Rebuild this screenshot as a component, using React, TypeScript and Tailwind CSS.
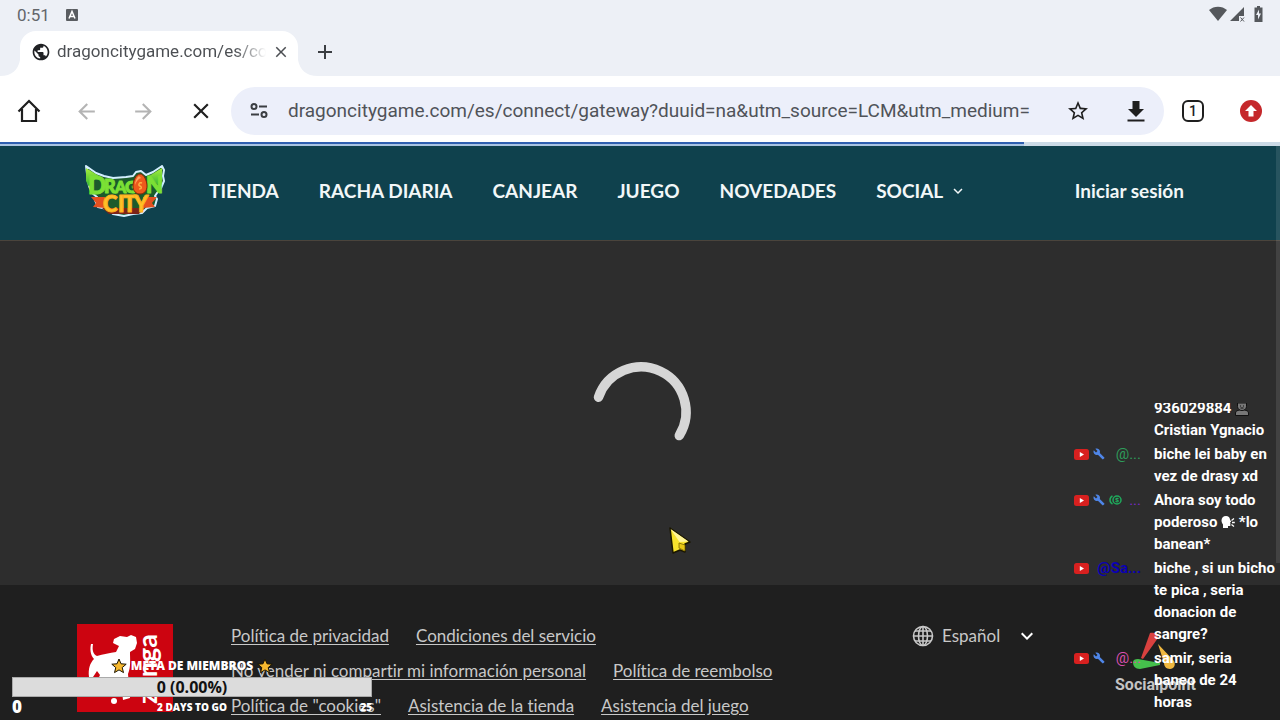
import type { ReactNode } from 'react'
import { MdArrowBack, MdArrowForward, MdBuild, MdClose, MdAdd, MdPublic, MdStarBorder, MdKeyboardArrowDown } from 'react-icons/md'

interface ChatMessage {
  id: number
  wrench?: boolean
  member?: boolean
  author?: string
  authorClass?: string
  text: ReactNode
}

const navItems = ['TIENDA', 'RACHA DIARIA', 'CANJEAR', 'JUEGO', 'NOVEDADES']

const footerLinks = [
  'Política de privacidad',
  'Condiciones del servicio',
  'No vender ni compartir mi información personal',
  'Política de reembolso',
  'Política de "cookies"',
  'Asistencia de la tienda',
  'Asistencia del juego',
]

const messages: ChatMessage[] = [
  { id: 1, text: <>936029884 <BustIcon /> Cristian Ygnacio</> },
  { id: 2, wrench: true, author: '@...', authorClass: 'text-[#2e9d5b]', text: 'biche lei baby en vez de drasy xd' },
  { id: 3, wrench: true, member: true, author: '...', authorClass: 'text-[#7a2bc4]', text: <>Ahora soy todo poderoso <SpeakingIcon /> *lo banean*</> },
  { id: 4, author: '@Sa...', authorClass: 'font-bold text-[#0a00b4]', text: 'biche , si un bicho te pica , seria donacion de sangre?' },
  { id: 5, wrench: true, author: '@...', authorClass: 'text-[#d94fae]', text: 'samir, seria baneo de 24 horas' },
]

function BustIcon() {
  return (
    <svg className="inline h-[14px] w-[14px] align-[-3px]" viewBox="0 0 14 14" fill="#777" stroke="#111" strokeWidth="1">
      <path d="M.5 13.500V11c0-2 2-2.500 4-3h5c2 .5 4 1 4 3v2.500z" />
      <path d="M2.500 1h9v3.500C11.500 7 9.200 8.500 7 8.500S2.500 7 2.500 4.500z" />
      <path d="M5 4h1M8 4h1M5.500 6h3" />
    </svg>
  )
}

function SpeakingIcon() {
  return (
    <svg className="inline h-[14px] w-[14px] align-[-2px]" viewBox="0 0 14 14" fill="#fff">
      <path d="M5 1C2.200 1 .5 3 .5 5.500c0 2 1 3 1.500 4V13h5v-2h1.500c.8 0 1-.6 1-1.300L9 9l.6-.6L9 7.500l1.200-.7L9 4.500C8.800 2.500 7.500 1 5 1z" />
      <path d="M10.500 5.500l2.500-2M11 7.500h2.800M10.500 9.500l2.500 2" stroke="#fff" strokeWidth="1.300" />
    </svg>
  )
}

function YoutubeIcon() {
  return (
    <svg className="h-[11px] w-[15px] shrink-0" viewBox="0 0 15 11">
      <rect width="15" height="11" rx="2.500" fill="#d8201f" />
      <path d="M5.800 3v5l4.200-2.500z" fill="#fff" />
    </svg>
  )
}

function MemberIcon() {
  return (
    <svg className="h-[10px] w-[13px] shrink-0" viewBox="0 0 13 10" fill="none" stroke="#1faa5c" strokeWidth="1.500">
      <path d="M3.500 1C1.500 2 1 3.500 1 5s.5 3 2.500 4" />
      <circle cx="8" cy="5" r="4" />
      <path d="M9.500 3.700C8.500 3 6.800 3.200 6.800 4.200S9.300 5 9.300 6 7.500 7 6.500 6.300" strokeWidth="1.200" />
    </svg>
  )
}

function StarIcon() {
  return (
    <svg className="h-[16px] w-[16px]" viewBox="0 0 16 16">
      <path d="M8 1l2 4.800 5.200.4-4 3.400 1.300 5L8 11.900l-4.500 2.700 1.300-5-4-3.400 5.200-.4z" fill="#f7b92f" stroke="#1c1500" strokeWidth="1" strokeLinejoin="round" />
    </svg>
  )
}

function DragonCityLogo() {
  return (
    <svg className="h-[52px] w-[84px]" viewBox="0 0 84 52" role="img" aria-label="Dragon City">
      <defs>
        <linearGradient id="green" x1="0" y1="0" x2="0" y2="1">
          <stop offset="0" stopColor="#a8f03c" />
          <stop offset="1" stopColor="#33b335" />
        </linearGradient>
        <linearGradient id="gold" x1="0" y1="0" x2="0" y2="1">
          <stop offset="0" stopColor="#ffe23a" />
          <stop offset="1" stopColor="#f88a14" />
        </linearGradient>
      </defs>
      {/* outline */}
      <path
        d="M4 1l10 7 8 3 9 2 13-1 7-1 3-4 5-1 5 4 7-3L80 1l2 4-1 6 1 5-3 7-4 5-2 3 2 3-2 7-8 2-5 5-9 1-9 2-11-2-6-5-9-2-3-7 2-3-5-4-3-7-1-6-1-6z"
        fill="#1c5a2c"
        stroke="#d3efff"
        strokeWidth="2"
        strokeLinejoin="round"
      />
      {/* wings */}
      <path d="M4 3l13 8-8 7-2 4-3-6z" fill="url(#green)" />
      <path d="M80 3L67 11l7 7 3 3 3-7z" fill="url(#green)" />
      {/* ribbon */}
      <path d="M9 32h14v11l-12-1 3-4zM75 32H61v11l12-1-3-4z" fill="#e5501f" />
      <path d="M20 43h42l-5 6H27z" fill="#7c2418" />
      <g fontFamily="Lato, sans-serif" fontWeight="900" strokeLinejoin="round">
        <g fill="#7be035" stroke="#7be035" strokeWidth="1">
          <text x="6" y="29" fontSize="24">D</text>
          <text x="22" y="28" fontSize="18">R</text>
          <text x="33" y="28" fontSize="16">A</text>
          <text x="43" y="28" fontSize="17">G</text>
          <text x="64" y="28" fontSize="22">N</text>
        </g>
        <g fill="#ffc128" stroke="#ffb01e" strokeWidth="1">
          <text x="21" y="47" fontSize="22">C</text>
          <text x="36" y="47" fontSize="22">I</text>
          <text x="41" y="47" fontSize="22">T</text>
          <text x="52" y="47" fontSize="22">Y</text>
        </g>
      </g>
      <path d="M58 9c4 0 7 7 7 12s-3 8-7 8-7-3-7-8 3-12 7-12z" fill="#ee5a1c" stroke="#8a2808" strokeWidth="1" />
      <path d="M57 11c-3 2-4 6-4 9 1-3 3-6 6-7z" fill="#ffa35f" />
      <path d="M60 18c-3-1-4 2-2 3s2 3-1 3" fill="none" stroke="#ffb045" strokeWidth="1.500" />
    </svg>
  )
}

function ZyngaLogo() {
  return (
    <svg className="h-[88px] w-[96px] shrink-0" viewBox="0 0 96 88" role="img" aria-label="Zynga">
      <rect width="96" height="88" fill="#cc0410" />
      <path
        d="M16 20c-1 6 0 10 4 12 6-2 13-3 19-4l3-6-6-3 1-4 6-3 7 1 4-2 5 2 1 6-2 6-5 3c0 8 1 15-2 22l2 24-7 2-2-17-13-5-9 7-5 3 6-13-3-4-6 9-2-3c-1-8 1-14 5-18-4-4-4-11-3-15z"
        fill="#fff"
      />
      <circle cx="37" cy="77" r="3" fill="#fff" />
      <text transform="translate(80 80) rotate(-90)" fontFamily="Lato, sans-serif" fontWeight="700" fontSize="27" fill="#fff">zynga</text>
    </svg>
  )
}

function SocialpointLogo() {
  return (
    <svg className="h-[62px] w-[82px] shrink-0" viewBox="0 0 82 62" role="img" aria-label="Socialpoint">
      <path d="M35 1c4-1 8 1 8 5L28 27l-2-1z" fill="#d9413f" />
      <path d="M18 30c0-2 2-3 5-3l22 4v2l-20 4c-5 0-7-3-7-7z" fill="#45c04c" />
      <path d="M43 12l16 17c2 4 0 8-4 8s-6-3-6-6z" fill="#f0b840" />
      <text x="0" y="58" fontFamily="Roboto, sans-serif" fontWeight="700" fontSize="16" fill="#c4c4c4">Socialpoint</text>
    </svg>
  )
}

function StatusBar() {
  return (
    <div className="flex h-[31px] items-center justify-between pb-0.5 pl-[17px] pr-[17px] text-[#63666b]">
      <div className="flex items-center gap-4">
        <span className="text-[17px] leading-5">0:51</span>
        <svg className="h-3 w-3" viewBox="0 0 12 12">
          <rect width="12" height="12" rx="1" fill="#5a5d61" />
          <path d="M3 9.500L6 2.500l3 7M4.200 7.500h3.600" fill="none" stroke="#fff" strokeWidth="1.500" />
        </svg>
      </div>
      <svg className="h-[17px] w-[54px]" viewBox="0 0 54 17" fill="#55585c">
        <path d="M0 4c5-4.500 13-4.500 18 0L9 15z" />
        <path d="M35 1v9h-5v5h-9z" />
        <path d="M31.500 11.500l3.500 4M35 11.500l-3.500 4" stroke="#55585c" />
        <path d="M48 0h3v1.500h2.500V16h-8V1.500H48z" />
        <path d="M50 3.500l-3 5.500h2v4.500l3-6h-2z" fill="#edf0f6" />
      </svg>
    </div>
  )
}

function TabStrip() {
  return (
    <div className="flex h-[45px] items-stretch pl-5 text-[#4b4e52]">
      <div className="relative flex w-[278px] items-center rounded-t-2xl bg-white pb-1 pl-[11px] pr-2">
        <svg className="absolute -left-5 bottom-0 h-4 w-5" viewBox="0 0 20 16" fill="#fff">
          <path d="M20 0v16H0c12 0 18-6 20-16z" />
        </svg>
        <svg className="absolute -right-5 bottom-0 h-4 w-5" viewBox="0 0 20 16" fill="#fff">
          <path d="M0 0v16h20C8 16 2 10 0 0z" />
        </svg>
        <MdPublic className="h-5 w-5 shrink-0 text-[#202124]" />
        <span className="ml-1.5 w-[209px] overflow-hidden bg-linear-to-r from-[#4b4e52] from-85% to-white bg-clip-text text-[17px] whitespace-nowrap text-transparent">
          dragoncitygame.com/es/con
        </span>
        <button className="ml-1.5" aria-label="Cerrar pestaña">
          <MdClose className="h-[18px] w-[18px]" />
        </button>
      </div>
      <button className="mb-1 ml-[15px]" aria-label="Nueva pestaña">
        <MdAdd className="h-6 w-6 text-[#3b3e42]" />
      </button>
    </div>
  )
}

function Toolbar() {
  return (
    <div className="flex h-[66px] items-center bg-white pt-1 pr-[18px] pl-4 text-[#1f1f1f]">
      <div className="flex w-[215px] shrink-0 items-center gap-8">
        <button aria-label="Inicio">
          <svg className="h-[26px] w-[26px]" viewBox="0 0 26 26" fill="none" stroke="currentColor" strokeWidth="2.200">
            <path d="M2.500 13.500L13 3l10.500 10.500M6 11v12h14V11" />
          </svg>
        </button>
        <button aria-label="Atrás" className="text-[#b4b4b4]" disabled>
          <MdArrowBack className="h-[25px] w-[25px]" />
        </button>
        <button aria-label="Adelante" className="text-[#b4b4b4]" disabled>
          <MdArrowForward className="h-[25px] w-[25px]" />
        </button>
        <button aria-label="Detener">
          <MdClose className="h-[26px] w-[26px]" />
        </button>
      </div>
      <form className="flex h-12 min-w-0 flex-1 items-center rounded-full bg-[#eceffa] pl-[18px] pr-4">
        <svg className="h-5 w-5 shrink-0" viewBox="0 0 20 20" fill="none" stroke="#3b3e42" strokeWidth="2">
          <circle cx="5" cy="5.500" r="2.500" />
          <path d="M10 5.500h8M2 13.500h8" />
          <circle cx="15" cy="13.500" r="2.500" />
        </svg>
        <input
          className="ml-[19px] min-w-0 flex-1 bg-transparent text-[19px] text-[#505359] outline-none"
          aria-label="Dirección"
          defaultValue="dragoncitygame.com/es/connect/gateway?duuid=na&utm_source=LCM&utm_medium="
        />
        <button type="button" className="ml-6" aria-label="Añadir a marcadores">
          <MdStarBorder className="h-6 w-6" />
        </button>
        <button type="button" className="ml-[34px]" aria-label="Descargar">
          <svg className="h-6 w-6" viewBox="0 0 24 24" fill="currentColor">
            <path d="M8.500 2h7v8H20l-8 8-8-8h4.500zM3.500 20.500h17v2h-17z" />
          </svg>
        </button>
      </form>
      <button className="ml-[18px] flex h-[22px] w-[22px] items-center justify-center rounded-md border-2 border-[#1f1f1f] text-sm font-medium" aria-label="Pestañas abiertas">
        1
      </button>
      <button className="ml-9" aria-label="Actualizar">
        <svg className="h-[22px] w-[22px]" viewBox="0 0 22 22">
          <circle cx="11" cy="11" r="11" fill="#c5282b" />
          <path d="M11 5l6 6h-3.500v5.500h-5V11H5z" fill="#fff" />
        </svg>
      </button>
    </div>
  )
}

function SiteHeader() {
  return (
    <header className="flex h-[95px] shrink-0 items-center border-b border-[#4a443c] bg-[#0f414d] pb-1 pl-[82px] pr-24 text-[19px] font-bold text-[#f2f7f8]">
      <a href="#">
        <DragonCityLogo />
      </a>
      <nav className="ml-[43px] flex items-center gap-10 whitespace-nowrap">
        {navItems.map((item) => (
          <a key={item} href="#">{item}</a>
        ))}
        <button className="flex items-center gap-1.5">
          SOCIAL
          <MdKeyboardArrowDown className="h-[18px] w-[18px]" />
        </button>
      </nav>
      <a href="#" className="ml-auto whitespace-nowrap">Iniciar sesión</a>
    </header>
  )
}

function SiteFooter() {
  return (
    <footer className="flex shrink-0 items-start bg-[#1f1f1f] pt-[39px] pr-[83px] pb-0.5 pl-[77px] text-[17px] leading-6 text-[#c8c8c8]">
      <ZyngaLogo />
      <nav className="ml-[58px] flex flex-1 flex-wrap gap-x-[27px] gap-y-[11px] [font-variant-ligatures:none]">
        {footerLinks.map((link) => (
          <a key={link} href="#" className="underline underline-offset-2">{link}</a>
        ))}
      </nav>
      <label className="relative flex w-[123px] items-center gap-2">
        <svg className="h-[22px] w-[22px] shrink-0" viewBox="0 0 22 22" fill="none" stroke="currentColor" strokeWidth="1.600">
          <circle cx="11" cy="11" r="9.500" />
          <ellipse cx="11" cy="11" rx="4.500" ry="9.500" />
          <path d="M11 1.500v19M1.500 11h19M3 6h16M3 16h16" />
        </svg>
        <select className="w-full appearance-none bg-transparent outline-none" aria-label="Idioma">
          <option>Español</option>
        </select>
        <MdKeyboardArrowDown className="pointer-events-none absolute -right-1 h-6 w-6 text-white" />
      </label>
      <div className="ml-20 pt-2">
        <SocialpointLogo />
      </div>
    </footer>
  )
}

function MemberGoal() {
  return (
    <section className="absolute bottom-[3px] left-3 w-[360px] font-['Open_Sans',sans-serif] font-extrabold text-white">
      <h2 className="flex h-[22px] items-center justify-center gap-1 text-[12px] leading-4">
        <StarIcon />
        META DE MIEMBROS
        <StarIcon />
      </h2>
      <div className="border border-[#aaa] bg-[#dcdcdc] text-center text-[16px] leading-[18px] font-bold text-[#111]">0 (0.00%)</div>
      <div className="flex h-5 items-center justify-between text-[10px]">
        <span className="w-10 text-[17px]">0</span>
        <span>2 DAYS TO GO</span>
        <span className="w-10 text-right">25</span>
      </div>
    </section>
  )
}

function ChatOverlay() {
  return (
    <ul className="absolute right-1 bottom-[7px] flex h-[310px] w-[202px] flex-col justify-end gap-0.5 overflow-hidden text-[15px] leading-[22px] text-white">
      {messages.map((message) => (
        <li key={message.id} className="flex">
          <div className="flex h-[22px] w-[67px] shrink-0 items-center gap-1">
            {message.author && <YoutubeIcon />}
            {message.wrench && <MdBuild className="h-3 w-3 shrink-0 text-[#4f86e8]" />}
            {message.member && <MemberIcon />}
            <span className={`ml-auto ${message.authorClass ?? ''}`}>{message.author}</span>
          </div>
          <p className="ml-[13px] flex-1 font-bold">{message.text}</p>
        </li>
      ))}
    </ul>
  )
}

export default function App() {
  return (
    <div className="relative flex h-screen flex-col overflow-hidden bg-[#2d2d2d] font-[Roboto,sans-serif]">
      {/* browser */}
      <div className="shrink-0 bg-[#edf0f6]">
        <StatusBar />
        <TabStrip />
        <Toolbar />
        <div className="h-1 bg-[#cbdae6]">
          <div className="h-full w-4/5 border-b-2 border-[#a9c4e2] bg-[#2f5fb0]" />
        </div>
      </div>

      {/* page */}
      <div className="relative flex flex-1 flex-col font-[Lato,sans-serif]">
        <SiteHeader />
        <main className="flex flex-1 items-center justify-center">
          <svg className="h-[100px] w-[100px] overflow-visible" viewBox="0 0 100 100" fill="none" stroke="#d6d6d6" strokeWidth="9.500" strokeLinecap="round">
            <path d="M8.500 34.200A45 45 0 1 1 89.300 72.600" />
          </svg>
        </main>
        <SiteFooter />
        <div className="absolute top-0 right-0 h-[417px] w-1 bg-white/10" />
      </div>

      {/* pointer */}
      <svg className="absolute top-[526px] left-[668px] h-[30px] w-6" viewBox="0 0 24 30">
        <path d="M2 2l20 14-5 2v8l-5-2-7 3z" fill="#f7e22c" stroke="#1a1600" strokeWidth="1.500" strokeLinejoin="round" />
        <path d="M2.500 3l18 12.500-9 .5z" fill="#fff59a" />
        <path d="M11 17l6 2v6l-6-3z" fill="#e8c914" stroke="#7a6500" strokeWidth=".8" />
      </svg>

      <MemberGoal />
      <ChatOverlay />
    </div>
  )
}
